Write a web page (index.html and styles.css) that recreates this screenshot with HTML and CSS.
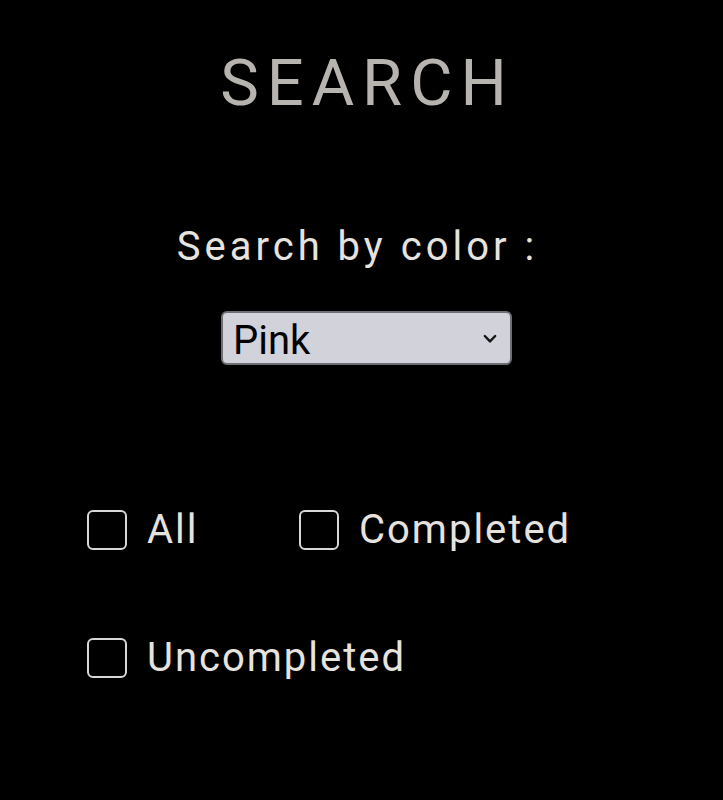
FILE: index.html
```html
<!DOCTYPE html>
<html>
<head>
<meta charset="utf-8">
<link rel="stylesheet" href="styles.css">
</head>
<body>
<main class="page">
  <h1 class="title">SEARCH</h1>
  <section class="color-search">
    <label class="color-label" for="color">Search by color :</label>
    <div class="select-wrap">
      <select id="color" class="color-select">
        <option>Pink</option>
        <option>Blue</option>
        <option>Green</option>
      </select>
      <svg class="chev" viewBox="0 0 14 10" width="14" height="10"><path d="M1.8 2 L7 7.4 L12.2 2" fill="none" stroke="#151515" stroke-width="2.4" stroke-linecap="round" stroke-linejoin="round"/></svg>
    </div>
  </section>
  <section class="filters">
    <div class="filter-row">
      <label class="check check-all"><input type="checkbox" class="box"><span>All</span></label>
      <label class="check"><input type="checkbox" class="box"><span>Completed</span></label>
    </div>
    <div class="filter-row">
      <label class="check"><input type="checkbox" class="box"><span>Uncompleted</span></label>
    </div>
  </section>
</main>
</body>
</html>
```
FILE: styles.css
```css
html, body {
  margin: 0;
  background: #000;
}
body {
  font-family: Roboto, "Liberation Sans", sans-serif;
  color: #e6e3df;
}
.page {
  display: flex;
  flex-direction: column;
  padding-top: 46px;
}
.title {
  margin: 0;
  text-align: center;
  font-weight: 400;
  font-size: 65px;
  line-height: 74px;
  letter-spacing: 8px;
  color: #b7b4b0;
  padding-left: 12px;
}
.color-search {
  display: flex;
  flex-direction: column;
  align-items: center;
  margin-top: 103px;
}
.color-label {
  font-size: 40px;
  line-height: 48px;
  letter-spacing: 4px;
  margin-right: 8px;
}
.select-wrap {
  position: relative;
  margin-top: 40px;
  margin-left: 10px;
}
.color-select {
  appearance: none;
  -webkit-appearance: none;
  display: block;
  width: 291px;
  height: 54px;
  box-sizing: border-box;
  background: #d2d2da;
  border: 2px solid #6e6e76;
  border-radius: 6px;
  font-family: Roboto, "Liberation Sans", sans-serif;
  font-size: 40px;
  line-height: 50px;
  color: #000;
  padding: 3px 0 0 10px;
  margin: 0;
}
.chev {
  position: absolute;
  right: 15px;
  top: 23px;
  pointer-events: none;
}
.filters {
  display: flex;
  flex-direction: column;
  gap: 80px;
  padding-left: 87px;
  margin-top: 141px;
}
.filter-row {
  display: flex;
  align-items: center;
  height: 48px;
}
.check {
  display: flex;
  align-items: center;
  gap: 20px;
  font-size: 40px;
  line-height: 48px;
  letter-spacing: 2px;
}
.check-all {
  width: 212px;
}
.box {
  appearance: none;
  -webkit-appearance: none;
  margin: 0;
  width: 40px;
  height: 40px;
  box-sizing: border-box;
  border: 2px solid #d8d8d8;
  border-radius: 6px;
  background: #000;
}
```
